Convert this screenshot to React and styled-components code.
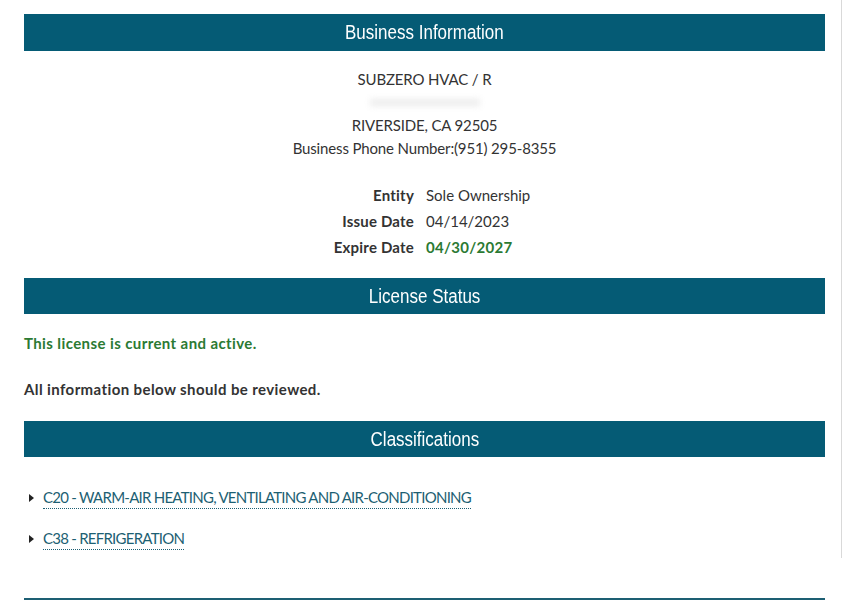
import React from 'react';
import styled, { createGlobalStyle } from 'styled-components';

const GlobalStyle = createGlobalStyle`
  html, body {
    margin: 0;
    padding: 0;
    background: #fff;
  }
  body {
    font-family: Lato, "Noto Sans", sans-serif;
    font-size: 15px;
    color: #333;
  }
`;

const Page = styled.div`
  width: 845px;
  height: 600px;
  overflow: hidden;
  display: flex;
  flex-direction: column;
`;

const Section = styled.section`
  padding: ${(p) => p.$pad || '0'};
  margin-right: 3px;
  border-right: 1px solid #d9d9d9;
  display: flex;
  flex-direction: column;
`;

const Inner = styled.div`
  margin: 0 16px 0 24px;
  display: flex;
  flex-direction: column;
`;

const HeaderBar = styled.h2`
  margin: 0;
  height: ${(p) => p.$h || 36}px;
  background: #055b75;
  color: #fff;
  font-family: "Liberation Sans", Arial, sans-serif;
  font-weight: normal;
  font-size: 20px;
  display: flex;
  align-items: center;
  justify-content: center;
  span {
    display: inline-block;
    transform: scaleX(0.85);
  }
`;

const Centered = styled.div`
  text-align: center;
  line-height: 23px;
  padding-top: ${(p) => p.$top || 0}px;
  letter-spacing: -0.15px;
`;

const Blurred = styled.div`
  height: 23px;
  display: flex;
  justify-content: center;
  align-items: center;
  span {
    display: block;
    width: 110px;
    height: 7px;
    background: #ececec;
    filter: blur(3px);
  }
`;

const DetailGrid = styled.dl`
  margin: 24px 0 0;
  display: grid;
  grid-template-columns: 390px 1fr;
  column-gap: 12px;
  row-gap: 4px;
  line-height: 22px;
  dt {
    text-align: right;
    font-weight: bold;
    letter-spacing: 0.2px;
  }
  dd {
    margin: 0;
  }
`;

const Value = styled.dd`
  color: ${(p) => (p.$ok ? '#2b7a33' : '#333')};
  font-weight: ${(p) => (p.$ok ? 'bold' : 'normal')};
  letter-spacing: ${(p) => (p.$ok ? '0.3px' : '0')};
`;

const Message = styled.p`
  margin: ${(p) => p.$m || '0'};
  font-weight: bold;
  line-height: 22px;
  letter-spacing: 0.4px;
  color: ${(p) => (p.$ok ? '#2b7a33' : '#333')};
`;

const ClassList = styled.ul`
  list-style: none;
  margin: 30px 0 0;
  padding: 0 0 0 2px;
  display: flex;
  flex-direction: column;
  gap: 19px;
`;

const ClassItem = styled.li`
  display: flex;
  align-items: center;
  gap: 9px;
  line-height: 22px;
  &::before {
    content: '';
    width: 0;
    height: 0;
    border-left: 5px solid #222;
    border-top: 4px solid transparent;
    border-bottom: 4px solid transparent;
    margin-left: 3px;
  }
`;

const ClassLink = styled.a`
  color: #1d5f73;
  text-decoration: none;
  border-bottom: 1px dotted #1d5f73;
  line-height: 21px;
  letter-spacing: -0.75px;
`;

const BottomRule = styled.hr`
  margin: 0 20px 0 24px;
  border: none;
  border-top: 2px solid #1d5f73;
`;

const Spacer = styled.div`
  flex: 1;
`;

export default function App() {
  return (
    <Page>
      <GlobalStyle />
      <Section $pad="14px 0 0">
        <Inner>
          <HeaderBar $h={37}><span>Business Information</span></HeaderBar>
          <Centered $top={17}>
            <div>SUBZERO HVAC / R</div>
            <Blurred><span /></Blurred>
            <div>RIVERSIDE, CA 92505</div>
            <div>Business Phone Number:(951) 295-8355</div>
          </Centered>
          <DetailGrid>
            <dt>Entity</dt>
            <Value>Sole Ownership</Value>
            <dt>Issue Date</dt>
            <Value>04/14/2023</Value>
            <dt>Expire Date</dt>
            <Value $ok>04/30/2027</Value>
          </DetailGrid>
          <div style={{ height: 5 }} />
        </Inner>
      </Section>
      <Section $pad="15px 0 0">
        <Inner>
          <HeaderBar><span>License Status</span></HeaderBar>
          <Message $ok $m="18px 0 0">This license is current and active.</Message>
          <Message $m="24px 0 0">All information below should be reviewed.</Message>
          <div style={{ height: 21 }} />
          <HeaderBar><span>Classifications</span></HeaderBar>
          <ClassList>
            <ClassItem>
              <ClassLink href="#">C20 - WARM-AIR HEATING, VENTILATING AND AIR-CONDITIONING</ClassLink>
            </ClassItem>
            <ClassItem>
              <ClassLink href="#">C38 - REFRIGERATION</ClassLink>
            </ClassItem>
          </ClassList>
          <div style={{ height: 8 }} />
        </Inner>
      </Section>
      <Spacer />
      <BottomRule />
    </Page>
  );
}
